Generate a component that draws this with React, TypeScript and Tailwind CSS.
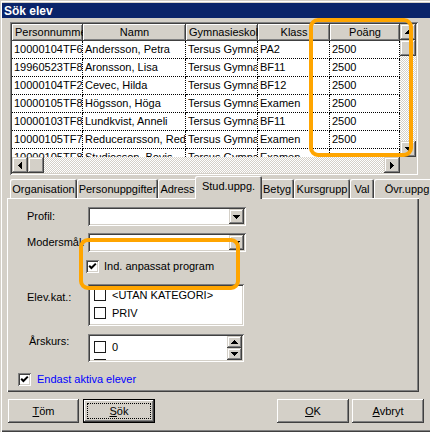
import React from 'react';

// Win2000 style bevels
const raised = "shadow-[inset_-1px_-1px_#404040,inset_1px_1px_#ffffff,inset_-2px_-2px_#808080]";
const scrollBtn = "shadow-[inset_-1px_-1px_#404040,inset_1px_1px_#d4d0c8,inset_-2px_-2px_#808080,inset_2px_2px_#ffffff]";
const sunken = "shadow-[inset_1px_1px_#808080,inset_-1px_-1px_#ffffff,inset_2px_2px_#404040,inset_-2px_-2px_#d4d0c8]";
const dither = "bg-[repeating-conic-gradient(#ffffff_0%_25%,#d4d0c8_0%_50%)] bg-[length:2px_2px]";

type Dir = 'up' | 'down' | 'left' | 'right';

const Tri: React.FC<{ dir: Dir }> = ({ dir }) => {
    const vertical = dir === 'up' || dir === 'down';
    const w = vertical ? 7 : 4;
    const h = vertical ? 4 : 7;
    const pts = {
        up: '3.5,0 7,4 0,4',
        down: '0,0 7,0 3.5,4',
        left: '4,0 4,7 0,3.5',
        right: '0,0 0,7 4,3.5',
    }[dir];
    return (
        <svg width={w} height={h} viewBox={`0 0 ${w} ${h}`} shapeRendering="crispEdges">
            <polygon points={pts} fill="#000" />
        </svg>
    );
};

const ScrollButton: React.FC<{ dir: Dir; className?: string }> = ({ dir, className = '' }) => (
    <div className={`bg-[#d4d0c8] ${scrollBtn} flex items-center justify-center shrink-0 ${className}`}>
        <Tri dir={dir} />
    </div>
);

const Check3D: React.FC<{ checked?: boolean }> = ({ checked }) => (
    <div className={`w-[13px] h-[13px] bg-white ${sunken} flex items-center justify-center shrink-0`}>
        {checked && (
            <svg width="9" height="9" viewBox="0 0 9 9">
                <path d="M1.2 3.8 L3.4 6 L7.8 1.6" stroke="#000" strokeWidth="2" fill="none" />
            </svg>
        )}
    </div>
);

const FlatBox = () => <div className="w-[12px] h-[12px] bg-white border border-[#1a1a1a] shrink-0" />;

const Combo = () => (
    <div className={`w-[158px] h-[19px] bg-white ${sunken} p-[2px] flex`}>
        <div className="flex-1" />
        <ScrollButton dir="down" className="w-[15px] h-[15px]" />
    </div>
);

const columns = [
    { title: 'Personnummer', w: 'w-[71px]', center: false },
    { title: 'Namn', w: 'w-[103px]', center: true },
    { title: 'Gymnasieskola', w: 'w-[72px]', center: false },
    { title: 'Klass', w: 'w-[72px]', center: true },
    { title: 'Poäng', w: 'w-[70px]', center: true },
];

const students = [
    ['10000104TF6', 'Andersson, Petra', 'Tersus Gymnasium', 'PA2', '2500'],
    ['19960523TF8', 'Aronsson, Lisa', 'Tersus Gymnasium', 'BF11', '2500'],
    ['10000104TF2', 'Cevec, Hilda', 'Tersus Gymnasium', 'BF12', '2500'],
    ['10000105TF8', 'Högsson, Höga', 'Tersus Gymnasium', 'Examen', '2500'],
    ['10000103TF8', 'Lundkvist, Anneli', 'Tersus Gymnasium', 'BF11', '2500'],
    ['10000105TF7', 'Reducerarsson, Reducera', 'Tersus Gymnasium', 'Examen', '2500'],
    ['10000105TF8', 'Studiosson, Bovis', 'Tersus Gymnasium', 'Examen', '2500'],
];

const tabs = [
    { label: 'Organisation', w: 'w-[67px]' },
    { label: 'Personuppgifter', w: 'w-[81px]' },
    { label: 'Adress', w: 'w-[39px]' },
    { label: 'Stud.uppg.', w: 'w-[67px]', active: true },
    { label: 'Betyg', w: 'w-[34px]' },
    { label: 'Kursgrupp', w: 'w-[56px]' },
    { label: 'Val', w: 'w-[24px]' },
    { label: 'Övr.uppg', w: 'w-[66px]' },
];

const Button: React.FC<{ children: React.ReactNode; w: string; isDefault?: boolean }> = ({ children, w, isDefault }) =>
    isDefault ? (
        <div className={`${w} h-[24px] border border-black flex shrink-0`}>
            <div className={`flex-1 bg-[#d4d0c8] ${raised} p-[3px] flex`}>
                <div className="flex-1 border border-dotted border-black flex items-center justify-center">{children}</div>
            </div>
        </div>
    ) : (
        <div className={`${w} h-[24px] bg-[#d4d0c8] ${raised} flex items-center justify-center shrink-0`}>{children}</div>
    );

export default function App() {
    return (
        <div className="w-[430px] h-[432px] bg-[#d4d0c8] relative overflow-hidden font-['Liberation_Sans',Arial,sans-serif] text-[11px] leading-none text-black shadow-[inset_1px_1px_#d4d0c8,inset_2px_2px_#ffffff,inset_0_-1px_#404040,inset_0_-2px_#808080]">
            <div className="pl-[2px] pt-[3px] flex flex-col">
                {/* title bar */}
                <div className="h-[15px] bg-[#0a246a] text-white font-bold text-[12px] flex items-center pl-[2px]">Sök elev</div>

                {/* result grid */}
                <div className={`mt-[4px] ml-[8px] w-[408px] h-[153px] p-[2px] ${sunken} flex`}>
                    <div className="w-[388px] flex flex-col">
                        <div className="h-[133px] bg-white overflow-hidden">
                            <div className="flex">
                                {columns.map(c => (
                                    <div key={c.title} className={`${c.w} h-[17px] shrink-0 bg-[#d4d0c8] ${raised} flex items-center overflow-hidden whitespace-nowrap ${c.center ? 'justify-center' : 'pl-[3px]'}`}>
                                        {c.title}
                                    </div>
                                ))}
                            </div>
                            {students.map((row, i) => (
                                <div key={i} className="flex">
                                    {row.map((cell, j) => (
                                        <div key={j} className={`${columns[j].w} h-[18px] shrink-0 border-r border-b border-dotted border-black flex items-center pl-[2px] overflow-hidden whitespace-nowrap`}>
                                            {cell}
                                        </div>
                                    ))}
                                </div>
                            ))}
                        </div>
                        <div className="h-[16px] flex">
                            <ScrollButton dir="left" className="w-[16px] h-[16px]" />
                            <div className={`w-[16px] h-[16px] bg-[#d4d0c8] ${scrollBtn}`} />
                            <div className={`flex-1 ${dither}`} />
                            <ScrollButton dir="right" className="w-[16px] h-[16px]" />
                        </div>
                    </div>
                    <div className="w-[16px] flex flex-col">
                        <div className="h-[133px] flex flex-col">
                            <ScrollButton dir="up" className="w-[16px] h-[16px]" />
                            <div className={`w-[16px] h-[16px] bg-[#d4d0c8] ${scrollBtn}`} />
                            <div className={`flex-1 ${dither}`} />
                            <ScrollButton dir="down" className="w-[16px] h-[16px]" />
                        </div>
                        <div className="h-[16px] bg-[#d4d0c8]" />
                    </div>
                </div>

                {/* tabs */}
                <div className="mt-[1px] ml-[5px] w-[412px]">
                    <div className="h-[22px] flex items-end pl-[3px]">
                        {tabs.map(t =>
                            t.active ? (
                                <div key={t.label} className={`${t.w} h-[23px] -mb-[1px] -mx-[2px] relative z-10 bg-[#d4d0c8] rounded-t-[2px] shadow-[inset_1px_1px_#ffffff,inset_-1px_0_#404040,inset_-2px_0_#808080] flex items-center justify-center whitespace-nowrap shrink-0 pb-[2px]`}>
                                    {t.label}
                                </div>
                            ) : (
                                <div key={t.label} className={`${t.w} h-[19px] bg-[#d4d0c8] rounded-t-[2px] shadow-[inset_1px_1px_#ffffff,inset_-1px_0_#404040,inset_-2px_0_#808080] flex items-center justify-center whitespace-nowrap overflow-hidden shrink-0 pt-[1px]`}>
                                    {t.label}
                                </div>
                            )
                        )}
                    </div>
                    <div className="h-[194px] bg-[#d4d0c8] shadow-[inset_1px_1px_#ffffff,inset_-1px_-1px_#404040,inset_-2px_-2px_#808080] pt-[9px] flex flex-col">
                        <div className="flex items-center h-[19px]">
                            <div className="w-[61px] ml-[20px]">Profil:</div>
                            <Combo />
                        </div>
                        <div className="flex items-center h-[19px] mt-[7px]">
                            <div className="w-[61px] ml-[20px] whitespace-nowrap overflow-hidden">Modersmål:</div>
                            <Combo />
                        </div>
                        <div className="flex items-center h-[13px] mt-[8px] ml-[79px] gap-[5px]">
                            <Check3D checked />
                            <span>Ind. anpassat program</span>
                        </div>
                        <div className="flex items-start mt-[11px]">
                            <div className="w-[61px] ml-[20px] mt-[7px] h-[13px] flex items-center">Elev.kat.:</div>
                            <div className={`w-[156px] h-[42px] bg-white ${sunken} p-[2px] overflow-hidden`}>
                                {['<UTAN KATEGORI>', 'PRIV'].map(s => (
                                    <div key={s} className="h-[18px] flex items-center pl-[4px] gap-[6px] whitespace-nowrap">
                                        <FlatBox />
                                        <span>{s}</span>
                                    </div>
                                ))}
                            </div>
                        </div>
                        <div className="flex items-start mt-[8px]">
                            <div className="w-[59px] ml-[22px] mt-[1px] h-[13px] flex items-center">Årskurs:</div>
                            <div className={`w-[156px] h-[28px] bg-white ${sunken} p-[2px] flex`}>
                                <div className="flex-1 overflow-hidden pt-[2px]">
                                    {['0', '1'].map(s => (
                                        <div key={s} className="h-[18px] flex items-center pl-[4px] gap-[6px]">
                                            <FlatBox />
                                            <span>{s}</span>
                                        </div>
                                    ))}
                                </div>
                                <div className="w-[15px] flex flex-col">
                                    <ScrollButton dir="up" className="w-[15px] h-[12px]" />
                                    <ScrollButton dir="down" className="w-[15px] h-[12px]" />
                                </div>
                            </div>
                        </div>
                        <div className="flex items-center h-[13px] mt-[11px] ml-[11px] gap-[6px]">
                            <Check3D checked />
                            <span className="text-[#0000ff]">Endast aktiva elever</span>
                        </div>
                    </div>
                </div>

                {/* buttons */}
                <div className="mt-[7px] ml-[6px] w-[416px] flex">
                    <Button w="w-[71px]"><span><span className="underline">T</span>öm</span></Button>
                    <div className="w-[4px]" />
                    <Button w="w-[72px]" isDefault><span><span className="underline">S</span>ök</span></Button>
                    <div className="flex-1" />
                    <Button w="w-[72px]"><span><span className="underline">O</span>K</span></Button>
                    <div className="w-[3px]" />
                    <Button w="w-[72px]"><span><span className="underline">A</span>vbryt</span></Button>
                </div>
            </div>

            {/* orange highlight markers */}
            <div className="absolute left-[309px] top-[18px] w-[104px] h-[139px] border-[4px] border-[#ffa500] rounded-[9px] pointer-events-none" />
            <div className="absolute left-[79px] top-[238px] w-[161px] h-[52px] border-[4px] border-[#ffa500] rounded-[9px] pointer-events-none" />
        </div>
    );
}
